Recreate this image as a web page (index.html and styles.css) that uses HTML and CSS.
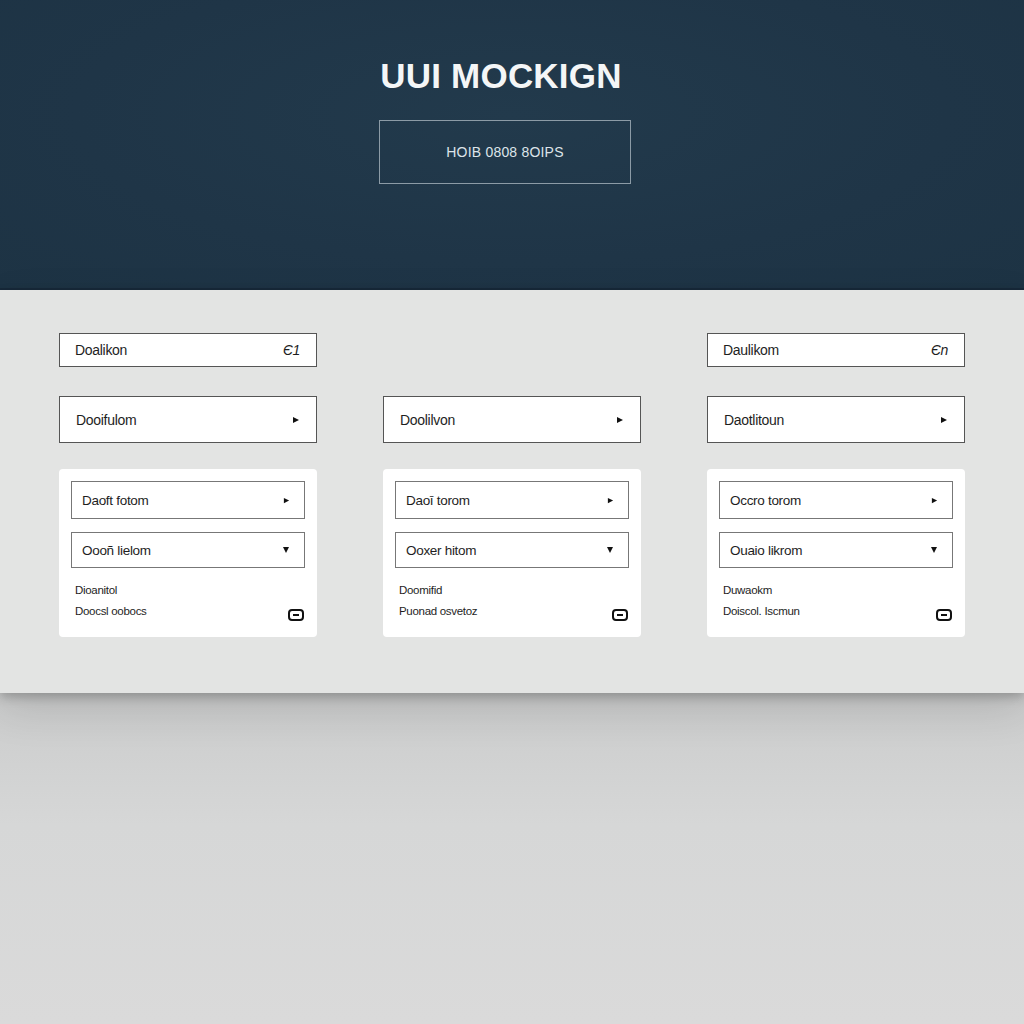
FILE: index.html
```html
<!DOCTYPE html>
<html>
<head>
<meta charset="utf-8">
<link rel="stylesheet" href="styles.css">
</head>
<body>
<header class="hero">
  <h1 class="title">UUI MOCKIGN</h1>
  <button class="hero-btn">HOIB 0808 8OIPS</button>
</header>
<main class="panel">
  <div class="row row-top">
    <div class="field f-sm"><span>Doalikon</span><span class="glyph">Є1</span></div>
    <div class="spacer"></div>
    <div class="field f-sm"><span>Daulikom</span><span class="glyph">Єn</span></div>
  </div>
  <div class="row row-mid">
    <div class="field f-lg"><span>Dooifulom</span><svg class="tri" viewBox="0 0 8 8"><path d="M1 1 L7 4 L1 7 Z"/></svg></div>
    <div class="field f-lg"><span>Doolilvon</span><svg class="tri" viewBox="0 0 8 8"><path d="M1 1 L7 4 L1 7 Z"/></svg></div>
    <div class="field f-lg"><span>Daotlitoun</span><svg class="tri" viewBox="0 0 8 8"><path d="M1 1 L7 4 L1 7 Z"/></svg></div>
  </div>
  <div class="row row-cards">
    <div class="card">
      <div class="sel s1"><span>Daoft fotom</span><svg class="tri sm" viewBox="0 0 8 8"><path d="M1 1 L7 4 L1 7 Z"/></svg></div>
      <div class="sel s2"><span>Oooñ lielom</span><svg class="tri down" viewBox="0 0 8 8"><path d="M1 1 L7 1 L4 7 Z"/></svg></div>
      <div class="meta">
        <div class="meta-a">Dioanitol</div>
        <div class="meta-b"><span>Doocsl oobocs</span><svg class="kbd" viewBox="0 0 16 12"><rect x="1" y="1" width="14" height="10" rx="3"/><path d="M5 6 H11"/></svg></div>
      </div>
    </div>
    <div class="card">
      <div class="sel s1"><span>Daoī torom</span><svg class="tri sm" viewBox="0 0 8 8"><path d="M1 1 L7 4 L1 7 Z"/></svg></div>
      <div class="sel s2"><span>Ooxer hitom</span><svg class="tri down" viewBox="0 0 8 8"><path d="M1 1 L7 1 L4 7 Z"/></svg></div>
      <div class="meta">
        <div class="meta-a">Doomifid</div>
        <div class="meta-b"><span>Puonad osvetoz</span><svg class="kbd" viewBox="0 0 16 12"><rect x="1" y="1" width="14" height="10" rx="3"/><path d="M5 6 H11"/></svg></div>
      </div>
    </div>
    <div class="card">
      <div class="sel s1"><span>Occro torom</span><svg class="tri sm" viewBox="0 0 8 8"><path d="M1 1 L7 4 L1 7 Z"/></svg></div>
      <div class="sel s2"><span>Ouaio likrom</span><svg class="tri down" viewBox="0 0 8 8"><path d="M1 1 L7 1 L4 7 Z"/></svg></div>
      <div class="meta">
        <div class="meta-a">Duwaokm</div>
        <div class="meta-b"><span>Doiscol. Iscmun</span><svg class="kbd" viewBox="0 0 16 12"><rect x="1" y="1" width="14" height="10" rx="3"/><path d="M5 6 H11"/></svg></div>
      </div>
    </div>
  </div>
</main>
<div class="below"></div>
</body>
</html>
```
FILE: styles.css
```css
* { box-sizing: border-box; }
html, body { margin: 0; padding: 0; }
body {
  width: 1024px;
  height: 1024px;
  overflow: hidden;
  background: #d9dada;
  font-family: "Liberation Sans", Arial, sans-serif;
  color: #1e1e1e;
}
.hero {
  height: 290px;
  background: radial-gradient(ellipse at 50% 40%, #223a4c 0%, #1f3547 60%, #1d3344 100%);
  display: flex;
  flex-direction: column;
  align-items: center;
  padding-top: 56px;
  padding-right: 20px;
  border-bottom: 2px solid #17293a;
}
.title {
  margin: 0 0 0 -2px;
  font-size: 35px;
  line-height: 40px;
  font-weight: 700;
  color: #f4f6f7;
  letter-spacing: 0.2px;
}
.hero-btn {
  margin-top: 24px;
  width: 252px;
  height: 64px;
  background: transparent;
  border: 1px solid #8c9ba6;
  color: #dde4e9;
  font-family: "Liberation Sans", Arial, sans-serif;
  font-size: 14px;
  letter-spacing: 0.2px;
  margin-left: 6px;
}
.panel {
  position: relative;
  z-index: 1;
  background: #e3e4e3;
  height: 403px;
  padding: 43px 59px 0 59px;
  box-shadow: 0 4px 10px rgba(0,0,0,0.22), 0 16px 40px rgba(0,0,0,0.12);
}
.row {
  display: grid;
  grid-template-columns: 258px 258px 258px;
  column-gap: 66px;
}
.row-top { height: 34px; }
.row-mid { margin-top: 29px; height: 47px; }
.row-cards { margin-top: 26px; }
.field {
  background: #fff;
  border: 1px solid #555;
  display: flex;
  align-items: center;
  justify-content: space-between;
  font-size: 14px;
  letter-spacing: -0.3px;
}
.f-sm { padding: 0 16px 0 15px; }
.f-lg { padding: 0 16px 0 16px; }
.glyph { font-size: 14px; font-style: italic; }
.tri { width: 8px; height: 8px; fill: #111; }
.tri.sm { width: 7px; height: 7px; }
.tri.down { width: 8px; height: 8px; }
.card {
  background: #fff;
  border-radius: 4px;
  height: 168px;
  padding: 12px 12px 0 12px;
  display: flex;
  flex-direction: column;
}
.sel {
  border: 1px solid #777;
  display: flex;
  align-items: center;
  justify-content: space-between;
  padding: 0 14px 0 10px;
  font-size: 13.5px;
  letter-spacing: -0.3px;
}
.s1 { height: 38px; }
.s2 { height: 36px; margin-top: 13px; }
.meta { margin-top: 15px; padding-left: 4px; font-size: 11.5px; letter-spacing: -0.3px; }
.meta-a { line-height: 14px; }
.meta-b {
  margin-top: 8px;
  display: flex;
  justify-content: space-between;
  align-items: flex-start;
  padding-right: 1px;
}
.kbd {
  width: 16px;
  height: 12px;
  margin-top: 4px;
  fill: none;
  stroke: #111;
  stroke-width: 2;
}
.below {
  height: 331px;
  background: linear-gradient(#cbcccc, #d6d7d7 40%, #dadada);
}
```
